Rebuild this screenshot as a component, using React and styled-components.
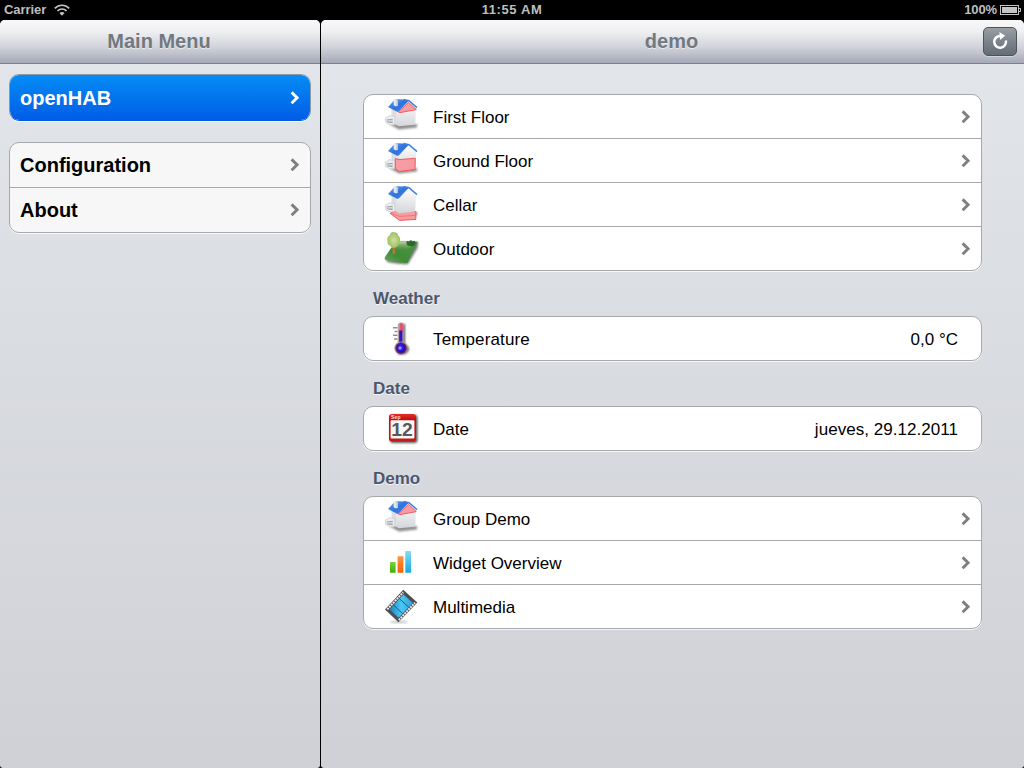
import React from 'react';
import styled, { createGlobalStyle } from 'styled-components';

const Global = createGlobalStyle`
  *, *::before, *::after { box-sizing: border-box; }
  body { margin: 0; background: #000; font-family: "Liberation Sans", Arial, sans-serif; }
`;

const Screen = styled.div`
  width: 1024px;
  height: 768px;
  display: flex;
  flex-direction: column;
  overflow: hidden;
  background: #000;
`;

const StatusBar = styled.header`
  height: 20px;
  flex: none;
  display: grid;
  grid-template-columns: 1fr auto 1fr;
  align-items: center;
  padding: 0 3px 0 4px;
  color: #bfbfbf;
  font-size: 13px;
  font-weight: bold;
  line-height: 20px;
`;

const StatusSide = styled.div`
  display: flex;
  align-items: center;
  justify-content: ${(p) => (p.$end ? 'flex-end' : 'flex-start')};
  gap: ${(p) => (p.$end ? '3px' : '8px')};
  svg { display: block; }
`;

const Label = styled.span`
  letter-spacing: ${(p) => p.$spacing || 0}px;
  white-space: nowrap;
`;

const Clock = styled(Label)`
  margin-right: 1px;
`;

const Split = styled.div`
  flex: 1;
  display: grid;
  grid-template-columns: 320px 703px;
  column-gap: 1px;
`;

const Pane = styled.section`
  display: flex;
  flex-direction: column;
  overflow: hidden;
  border-radius: 5px 5px 3px 3px;
  background: linear-gradient(#e2e5ea 44px, #dadde2 300px, #d0d1d6 748px);
`;

const NavBar = styled.div`
  height: 44px;
  flex: none;
  display: grid;
  grid-template-columns: 1fr auto 1fr;
  align-items: center;
  padding: 0 7px 1px;
  border-bottom: 1px solid #7b8092;
  background: linear-gradient(#f8f8f9 0, #eeeff1 12px, #d1d3da 27px, #a6a9b8 43px);
`;

const Title = styled.h1`
  grid-column: 2;
  margin: 0 2px 1px 0;
  font-size: 20px;
  line-height: 24px;
  color: #717880;
  text-shadow: 0 1px 0 rgba(255, 255, 255, 0.55);
`;

const ReloadButton = styled.button`
  justify-self: end;
  width: 34px;
  height: 29px;
  padding: 0;
  display: grid;
  place-items: center;
  border: 1px solid #4f545b;
  border-radius: 5px;
  background: linear-gradient(#9a9ea5, #7c838c 50%, #656d77);
  box-shadow: 0 1px 0 rgba(255, 255, 255, 0.35);
`;

const Menu = styled.nav`
  display: flex;
  flex-direction: column;
  gap: 21px;
  padding: 10px 9px;
`;

const Content = styled.main`
  padding: 30px 42px;
`;

const Group = styled.div`
  border: 1px solid #a6a8ab;
  border-radius: 10px;
  overflow: hidden;
  background: ${(p) => (p.$menu ? '#f7f7f7' : '#fff')};
  box-shadow: 0 1px 0 rgba(255, 255, 255, 0.8);
`;

const MenuRow = styled.div`
  height: ${(p) => (p.$active ? 45 : 44)}px;
  display: flex;
  align-items: center;
  justify-content: space-between;
  padding: ${(p) => (p.$active ? 1 : 0)}px 10px 0 10px;
  font-size: 20px;
  font-weight: bold;
  color: ${(p) => (p.$active ? '#fff' : '#000')};
  background: ${(p) => (p.$active ? 'linear-gradient(#058cf5, #015de6)' : 'none')};
  & + & { border-top: 1px solid #a6a8ab; height: 45px; }
`;

const ActiveGroup = styled(Group)`
  border-color: #8b99a8;
  border-bottom-color: #015de6;
`;

const Row = styled.div`
  height: 43px;
  display: flex;
  align-items: center;
  padding: 1px ${(p) => (p.$value ? 23 : 10)}px 0 19px;
  font-size: 17px;
  color: #000;
  & + & { border-top: 1px solid #a6a8ab; height: 44px; }
`;

const RowText = styled(Label)`
  padding-top: 2px;
`;

const RowLabel = styled(RowText)`
  flex: 1;
  margin-left: 14px;
`;

const IconBox = styled.svg`
  width: 36px;
  height: 36px;
  flex: none;
  display: block;
  margin-bottom: 2px;
`;

const SectionTitle = styled.h2`
  margin: 0;
  height: 45px;
  padding: 18px 0 0 10px;
  font-size: 17px;
  line-height: 20px;
  color: #4c566c;
  text-shadow: 0 1px 0 rgba(255, 255, 255, 0.8);
`;

const ChevronSvg = styled.svg`
  flex: none;
  display: block;
  margin-bottom: 1px;
`;

const Chevron = ({ color = '#7f7f7f' }) => (
  <ChevronSvg width="10" height="14" viewBox="0 0 10 14">
    <path d="M1.6 1.4 7.1 6.8 1.6 12.2" fill="none" stroke={color} strokeWidth="2.9" />
  </ChevronSvg>
);

const Wifi = () => (
  <svg width="16" height="12" viewBox="0 0 16 12" fill="none" stroke="#c4c4c4" strokeWidth="1.7">
    <path d="M.8 4.4C4.8.2 11.2.2 15.2 4.4M3.4 7c2.6-2.7 6.6-2.7 9.2 0" />
    <path d="M5.4 9.1c1.5-1.6 3.7-1.6 5.2 0L8 11.7z" fill="#c4c4c4" stroke="none" />
  </svg>
);

const Battery = () => (
  <svg width="21" height="11" viewBox="0 0 21 11">
    <rect x=".5" y=".5" width="18" height="9" fill="none" stroke="#c4c4c4" />
    <rect x="2" y="2" width="15" height="6" fill="#c4c4c4" />
    <path d="M19 3.5h1.5v3H19" fill="none" stroke="#c4c4c4" />
  </svg>
);

const Reload = () => (
  <svg width="18" height="20" viewBox="0 0 18 20">
    <path d="M14.9 9.6A5.9 5.9 0 1 1 9.6 4.9" fill="none" stroke="#fff" strokeWidth="2.5" />
    <path d="M8.4 1 14.2 4.8 9 9z" fill="#fff" />
  </svg>
);

const House = ({ floor }) => {
  const id = React.useId();
  const red = { fill: '#f79da1', stroke: '#ee5a61', strokeWidth: 1 };
  return (
    <IconBox viewBox="0 0 36 36">
      <defs>
        <linearGradient id={id + 'r'} x1="0" y1="0" x2="1" y2="1">
          <stop offset="0" stopColor="#5f9dec" />
          <stop offset=".5" stopColor="#2f74dd" />
          <stop offset="1" stopColor="#4a8ae4" />
        </linearGradient>
        <linearGradient id={id + 'w'} x1="0" y1="0" x2="0" y2="1">
          <stop offset="0" stopColor="#fdfdfe" />
          <stop offset="1" stopColor="#d5d6da" />
        </linearGradient>
        <filter id={id + 's'} x="-30%" y="-100%" width="160%" height="300%">
          <feGaussianBlur stdDeviation="1.2" />
        </filter>
      </defs>
      <path d="M6 26 16 31.5 34 29.5V26z" fill="#444" opacity=".6" filter={`url(#${id}s)`} />
      {floor === 'cellar' && (
        <path d="M7.3 27.3 12 25 32.8 25.5V33.4L16.5 34.4z" {...red} />
      )}
      <g transform={floor === 'cellar' ? 'translate(0 -1)' : undefined}>
        <path d="M8.5 10 16.5 14V28.2L8.5 24z" fill="#dddee3" />
        <path d="M13.5 13.5 25.5 3.6 33 10.5 32.2 26.4 16 28.3 12.8 26z" fill={`url(#${id}w)`} />
        <path d="M2.2 20.3 6.5 17.6 11.8 18.6V26.4L8 27 2.8 24.8z" fill="#ebecee" stroke="#c4c5ca" strokeWidth=".6" />
        <path d="M3.6 21.4 9.6 20.7V25.2L4 24.2z" fill="#a2a4aa" />
        <path d="M3.8 22.6 9.6 22.2V23.6L3.9 23.2z" fill="#eeeff1" />
        <path d="M5 9 12 1.4Q18 .9 26 2.6L16 13.2 14.5 14z" fill={`url(#${id}r)`} />
        <path d="M20.5 1.6 26 2.8 34 9.6" fill="none" stroke="#3d7fdf" strokeWidth="1.5" />
        {floor === 'first' && <path d="M15.3 14 25.6 4.4 33.3 11.6 17 14.6z" {...red} />}
        {floor === 'ground' && (
          <path d="M12.3 16.6 17 17.6 32.3 16.2 32 27.4 16.6 29.4 12.3 27z" {...red} />
        )}
        <path d="M10.6 3Q10.8 1.2 12.8 1.2T15 3.2V7.6L13 8.4 10.6 7.2z" fill="#e4e8f0" />
        <path d="M13.4 1.6 15 3.4V7.6L13.4 8.2z" fill="#bcc6d8" />
      </g>
      {floor === 'cellar' && <path d="M7.5 27.5 16.8 30.4 32.8 29.4" fill="none" stroke="#ee6a70" strokeWidth=".8" />}
    </IconBox>
  );
};

const Outdoor = () => (
  <IconBox viewBox="0 0 36 36">
    <defs>
      <linearGradient id="grass" x1="0" y1="1" x2="1" y2="0">
        <stop offset="0" stopColor="#6ba75b" />
        <stop offset=".35" stopColor="#3f8b38" />
        <stop offset="1" stopColor="#4f9444" />
      </linearGradient>
      <linearGradient id="lawnLight" x1="0" y1="0" x2="0" y2="1">
        <stop offset="0" stopColor="#c4d69c" />
        <stop offset="1" stopColor="#5d9950" stopOpacity="0" />
      </linearGradient>
      <radialGradient id="tree">
        <stop offset="0" stopColor="#cfe09c" />
        <stop offset="1" stopColor="#9ec066" />
      </radialGradient>
      <filter id="lawnShadow" x="-20%" y="-20%" width="140%" height="140%">
        <feGaussianBlur stdDeviation="1" />
      </filter>
    </defs>
    <path d="M3 28 14 12 35.5 12 34.5 18 25 34Q20 35 4 32z" fill="#333" opacity=".65" filter="url(#lawnShadow)" />
    <path d="M1.8 27.5Q7 19 13.5 11.5L34.8 11.8Q29 23 24.5 33 11 32.8 1.8 29.5z" fill="url(#grass)" />
    <path d="M8 20 13.5 11.5 32 12 24 21z" fill="url(#lawnLight)" />
    <path d="M23.5 13.5Q23 10 26 11.5 28 9 29.5 11.5 32 9.5 32.8 13.5 31 17 27.5 16 24 16.5 23.5 13.5z" fill="#296b2c" />
    <path d="M10 15h1.8l.5 9H9.4z" fill="#b9772f" />
    <path d="M4.5 10.5Q3.5 7 6.5 5.5 8 1.3 11 2.2 14.5 2 15.2 5.5 18.2 8 16.6 12 15.6 16.4 11.6 17.8 8.6 18.6 6.8 15.6 4 14.8 4.5 10.5z" fill="url(#tree)" />
  </IconBox>
);

const Thermometer = () => (
  <IconBox viewBox="0 0 36 36">
    <defs>
      <filter id="thermoShadow" x="-50%" y="-20%" width="200%" height="140%">
        <feGaussianBlur stdDeviation="1.1" />
      </filter>
      <radialGradient id="bulb">
        <stop offset="0" stopColor="#4934ff" />
        <stop offset=".6" stopColor="#2a08a8" />
        <stop offset="1" stopColor="#7a3050" />
      </radialGradient>
    </defs>
    <path d="M17.5 4h4.5v20q4 2 4 6-3 6-11 4z" fill="#222" opacity=".75" filter="url(#thermoShadow)" />
    <rect x="14.8" y="2.4" width="5.8" height="25" rx="2.9" fill="#b9a1a7" />
    <rect x="16.8" y="3.2" width="3.1" height="9" rx="1" fill="#e3526d" />
    <rect x="16.2" y="10.5" width="3.2" height="18" fill="#3113bf" />
    <circle cx="18" cy="28.2" r="6.6" fill="#a88d96" />
    <circle cx="18.1" cy="28.2" r="5.7" fill="url(#bulb)" />
    <path d="M17.6 22Q21.5 27 20.8 29.5 17.8 33 14.6 29.5 13.9 27 17.6 22z" fill="#3018f0" />
    <circle cx="17" cy="28" r="1.7" fill="#8d92ff" />
    <path d="M10 7.8h4.4M11.5 11.6h3M10 15.2h4.4M11 19h3.4" stroke="#8d8d8d" strokeWidth="1.5" />
  </IconBox>
);

const CalendarText = styled.text`
  font-family: "Liberation Sans", Arial, sans-serif;
  font-weight: bold;
`;

const Calendar = () => (
  <IconBox viewBox="0 0 36 36">
    <defs>
      <filter id="calShadow" x="-20%" y="-20%" width="140%" height="140%">
        <feGaussianBlur stdDeviation=".8" />
      </filter>
      <linearGradient id="calRed" x1="0" y1="0" x2="0" y2="1">
        <stop offset="0" stopColor="#e0302d" />
        <stop offset=".2" stopColor="#c40d0e" />
        <stop offset="1" stopColor="#c01a1b" />
      </linearGradient>
    </defs>
    <rect x="7" y="5" width="27.5" height="28" rx="3" fill="#222" opacity=".75" filter="url(#calShadow)" />
    <rect x="6" y="4" width="27" height="27.4" rx="3" fill="url(#calRed)" />
    <rect x="7.6" y="10.3" width="23.8" height="18.2" rx="1" fill="#f8f8f8" />
    <CalendarText x="8" y="8.9" fontSize="5" fill="#ffdada" textLength="9.5">Sep</CalendarText>
    <CalendarText x="8.3" y="26" fontSize="18" fill="#585858" textLength="21.5" lengthAdjust="spacingAndGlyphs">12</CalendarText>
  </IconBox>
);

const Bars = () => (
  <IconBox viewBox="0 0 36 36">
    <defs>
      {[['barG', '#7bd334', '#3daf0c'], ['barO', '#ff9446', '#f66200'], ['barB', '#86dcf4', '#13a9e3']].map(([id, a, b]) => (
        <linearGradient key={id} id={id} x1="0" y1="0" x2="0" y2="1">
          <stop offset="0" stopColor={a} />
          <stop offset="1" stopColor={b} />
        </linearGradient>
      ))}
    </defs>
    <rect x="7" y="18" width="5.6" height="10.8" rx=".6" fill="url(#barG)" />
    <rect x="14.6" y="12.2" width="5.8" height="16.6" rx=".6" fill="url(#barO)" />
    <rect x="22.3" y="7" width="5.8" height="21.8" rx=".6" fill="url(#barB)" />
  </IconBox>
);

const Film = () => (
  <IconBox viewBox="0 0 36 36">
    <defs>
      <linearGradient id="filmBlue" x1="0" y1="0" x2="1" y2="0">
        <stop offset="0" stopColor="#1685bd" />
        <stop offset=".5" stopColor="#4cc6f3" />
        <stop offset="1" stopColor="#2ba5dc" />
      </linearGradient>
      <filter id="filmShadow" x="-20%" y="-100%" width="140%" height="300%">
        <feGaussianBlur stdDeviation=".8" />
      </filter>
    </defs>
    <ellipse cx="16" cy="34" rx="9" ry="1" fill="#555" opacity=".4" filter="url(#filmShadow)" />
    <g transform="translate(0 .6)">
      <path d="M2 20.8 20.2 1.2 34.3 14 15.5 33.6z" fill="#4a4f52" />
      <path d="M6.6 20.8 20.4 6 29.8 14.4 15.6 29.2z" fill="url(#filmBlue)" />
      <path d="M10.6 16.5 19.6 25.1M16.5 10.2 25.8 18.6" stroke="#1f5d7a" strokeWidth="1" />
      <path d="M4.3 20.8 20.2 3.6M15.8 31.4 32 14.2" stroke="#ececec" strokeWidth="2" strokeDasharray="1.9 .9" />
    </g>
  </IconBox>
);

const MenuItem = ({ text, active }) => (
  <MenuRow $active={active}>
    <Label>{text}</Label>
    <Chevron color={active ? '#fff' : undefined} />
  </MenuRow>
);

const Item = ({ icon, text, spacing, value, valueSpacing }) => (
  <Row $value={!!value}>
    {icon}
    <RowLabel $spacing={spacing}>{text}</RowLabel>
    {value ? <RowText $spacing={valueSpacing}>{value}</RowText> : <Chevron />}
  </Row>
);

export default function App() {
  return (
    <>
      <Global />
      <Screen>
        <StatusBar>
          <StatusSide><Label $spacing={-0.05}>Carrier</Label><Wifi /></StatusSide>
          <Clock $spacing={0.6}>11:55 AM</Clock>
          <StatusSide $end><Label $spacing={-0.1}>100%</Label><Battery /></StatusSide>
        </StatusBar>
        <Split>
          <Pane>
            <NavBar><Title>Main Menu</Title></NavBar>
            <Menu>
              <ActiveGroup><MenuItem text="openHAB" active /></ActiveGroup>
              <Group $menu>
                <MenuItem text="Configuration" />
                <MenuItem text="About" />
              </Group>
            </Menu>
          </Pane>
          <Pane>
            <NavBar>
              <Title>demo</Title>
              <ReloadButton aria-label="Reload"><Reload /></ReloadButton>
            </NavBar>
            <Content>
              <Group>
                <Item icon={<House floor="first" />} text="First Floor" />
                <Item icon={<House floor="ground" />} text="Ground Floor" />
                <Item icon={<House floor="cellar" />} text="Cellar" />
                <Item icon={<Outdoor />} text="Outdoor" />
              </Group>
              <SectionTitle>Weather</SectionTitle>
              <Group>
                <Item icon={<Thermometer />} text="Temperature" spacing={0.13} value="0,0 °C" />
              </Group>
              <SectionTitle>Date</SectionTitle>
              <Group>
                <Item icon={<Calendar />} text="Date" value="jueves, 29.12.2011" valueSpacing={0.04} />
              </Group>
              <SectionTitle>Demo</SectionTitle>
              <Group>
                <Item icon={<House floor="first" />} text="Group Demo" />
                <Item icon={<Bars />} text="Widget Overview" />
                <Item icon={<Film />} text="Multimedia" />
              </Group>
            </Content>
          </Pane>
        </Split>
      </Screen>
    </>
  );
}
